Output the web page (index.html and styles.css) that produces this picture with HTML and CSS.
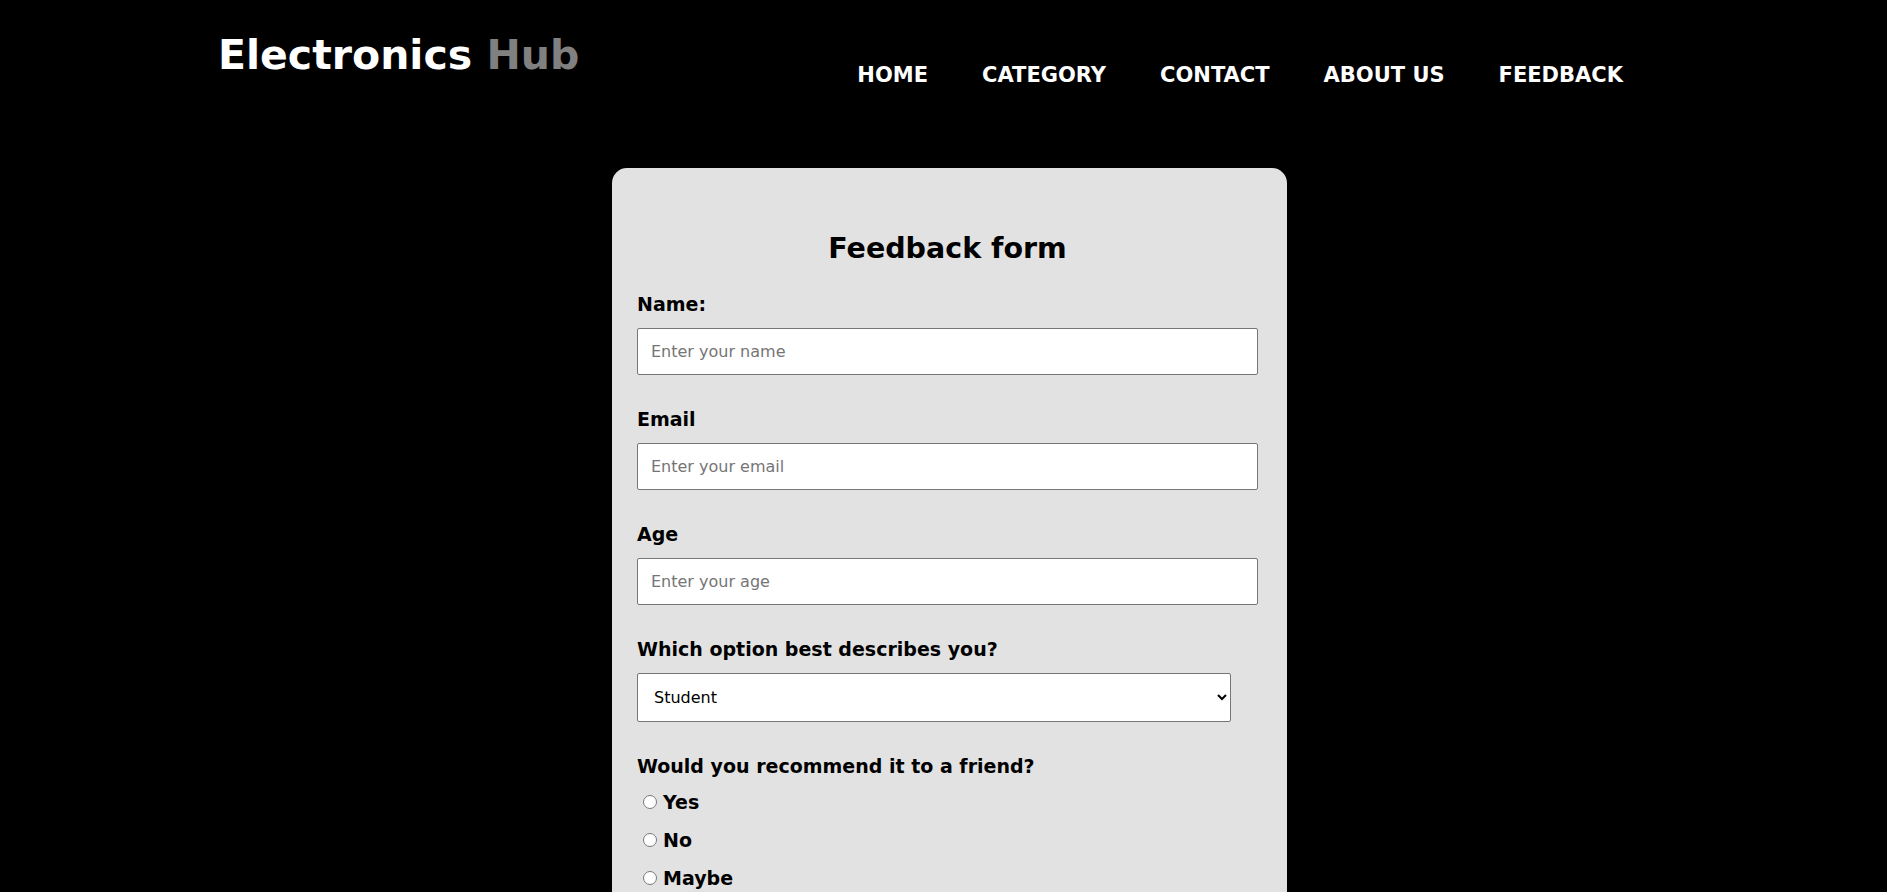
FILE: index.html
```html
<!DOCTYPE html>
<html lang="en">
<head>
<meta charset="utf-8">
<title>Electronics Hub - Feedback</title>
<link rel="stylesheet" href="styles.css">
</head>
<body>
<header class="site-header">
  <div class="logo">Electronics <span class="logo-accent">Hub</span></div>
  <nav class="nav">
    <a class="nav-link" href="#">HOME</a>
    <a class="nav-link" href="#">CATEGORY</a>
    <a class="nav-link" href="#">CONTACT</a>
    <a class="nav-link" href="#">ABOUT US</a>
    <a class="nav-link" href="#">FEEDBACK</a>
  </nav>
</header>
<main class="main">
  <form class="card">
    <h2 class="card-title">Feedback form</h2>
    <div class="field">
      <label class="field-label" for="name">Name:</label>
      <input class="text-input" id="name" type="text" placeholder="Enter your name">
    </div>
    <div class="field">
      <label class="field-label" for="email">Email</label>
      <input class="text-input" id="email" type="email" placeholder="Enter your email">
    </div>
    <div class="field">
      <label class="field-label" for="age">Age</label>
      <input class="text-input" id="age" type="text" placeholder="Enter your age">
    </div>
    <div class="field">
      <label class="field-label" for="role">Which option best describes you?</label>
      <select class="select-input" id="role">
        <option>Student</option>
        <option>Professional</option>
        <option>Hobbyist</option>
      </select>
    </div>
    <div class="field field-radios">
      <div class="field-label">Would you recommend it to a friend?</div>
      <label class="radio-row"><input class="radio" type="radio" name="rec">Yes</label>
      <label class="radio-row"><input class="radio" type="radio" name="rec">No</label>
      <label class="radio-row"><input class="radio" type="radio" name="rec">Maybe</label>
    </div>
  </form>
</main>
</body>
</html>
```
FILE: styles.css
```css
html, body {
  margin: 0;
  padding: 0;
  background: #000;
}

body {
  font-family: "DejaVu Sans", "Liberation Sans", sans-serif;
  color: #000;
}

.site-header {
  display: flex;
  justify-content: space-between;
  align-items: flex-start;
  padding: 30px 238px 0 218px;
}

.logo {
  font-size: 41px;
  line-height: 50px;
  font-weight: 700;
  color: #fff;
}

.logo-accent {
  color: #808080;
}

.nav {
  display: flex;
  gap: 2px;
  margin-top: 33px;
}

.nav-link {
  display: block;
  padding: 0 26px;
  font-size: 21px;
  line-height: 24px;
  font-weight: 700;
  color: #fff;
  text-decoration: none;
}

.main {
  display: flex;
  justify-content: center;
  padding: 81px 0 0 12px;
}

.card {
  width: 675px;
  box-sizing: border-box;
  background: #e2e2e2;
  border-radius: 15px 15px 0 0;
  padding: 63px 29px 40px 25px;
}

.card-title {
  margin: 0;
  text-align: center;
  font-size: 28.5px;
  line-height: 36px;
  font-weight: 700;
}

.field {
  display: flex;
  flex-direction: column;
  align-items: flex-start;
  margin-top: 25px;
}

.field + .field {
  margin-top: 32px;
}

.field-label {
  font-size: 19px;
  line-height: 24px;
  font-weight: 700;
  margin-bottom: 12px;
}

.text-input {
  width: 100%;
  height: 47px;
  box-sizing: border-box;
  border: 1px solid #767676;
  border-radius: 2px;
  padding: 0 13px;
  font-family: "DejaVu Sans", "Liberation Sans", sans-serif;
  font-size: 16px;
  background: #fff;
}

.text-input::placeholder {
  color: #757575;
}

.select-input {
  width: 594px;
  height: 49px;
  box-sizing: border-box;
  border: 1px solid #767676;
  border-radius: 2px;
  padding: 0 12px;
  font-family: "DejaVu Sans", "Liberation Sans", sans-serif;
  font-size: 16px;
  color: #000;
  background: #fff;
}

.field-radios .field-label {
  margin-bottom: 5px;
}

.radio-row {
  display: block;
  font-size: 19px;
  line-height: 38px;
  font-weight: 700;
}

.radio {
  margin: 0 6px 0 6px;
  width: 14px;
  height: 14px;
}
```
